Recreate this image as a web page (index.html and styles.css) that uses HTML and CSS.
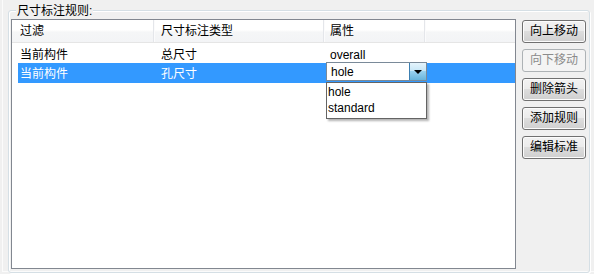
FILE: index.html
```html
<!doctype html>
<html>
<head>
<meta charset="UTF-8">
<title>尺寸标注规则</title>
<link rel="stylesheet" href="styles.css">
</head>
<body>
<div class="frame">
<div class="group">
<div class="group-title">尺寸标注规则:</div>
<div class="group-body">
<div class="list">
<div class="row head">
<div class="cell c1">过滤</div>
<div class="cell c2">尺寸标注类型</div>
<div class="cell c3">属性</div>
<div class="cell c4"></div>
</div>
<div class="row">
<div class="cell c1">当前构件</div>
<div class="cell c2">总尺寸</div>
<div class="cell c3">overall</div>
<div class="cell c4"></div>
</div>
<div class="row selected">
<div class="cell c1">当前构件</div>
<div class="cell c2">孔尺寸</div>
<div class="cell c3 edit">
<div class="combo">
<span class="combo-text">hole</span>
<span class="combo-btn"><span class="arrow"></span></span>
</div>
<div class="dropdown">
<div class="opt">hole</div>
<div class="opt">standard</div>
</div>
</div>
<div class="cell c4"></div>
</div>
</div>
<div class="buttons">
<div class="btn">向上移动</div>
<div class="btn disabled">向下移动</div>
<div class="btn">删除箭头</div>
<div class="btn">添加规则</div>
<div class="btn">编辑标准</div>
</div>
</div>
</div>
</div>
</body>
</html>
```

FILE: styles.css
```css
html, body{margin:0; padding:0;}
body{width:594px; height:274px; background-color:#f0f0f0; font-family:"Liberation Sans", "Noto Sans CJK SC", sans-serif; font-size:12px; color:#000000; overflow:hidden;}
.frame{height:272px; margin-left:2px; border-left:1px solid #fbfbfb; border-bottom:1px solid #fbfbfb; padding:10px 4px 0 5px; box-sizing:border-box;}
.group{position:relative; height:261px; border:1px solid #d5dfe5; border-radius:3px; box-shadow:inset 1px 1px 0 #ffffff, 1px 1px 0 #ffffff;}
.group-title{position:absolute; top:-8px; left:7px; padding:0 1px; line-height:16px; background-color:#f0f0f0;}
.group-body{display:flex; gap:6px; padding:8px 0 0 2px; height:100%; box-sizing:border-box;}
.list{width:505px; height:250px; border:1px solid #828790; background-color:#ffffff; box-sizing:border-box;}
.row{display:grid; grid-template-columns:142px 170px 101px 1fr; height:19px; line-height:19px;}
.row .cell{padding-top:2px;}
.row.head{height:23px; line-height:21px; background:linear-gradient(#ffffff 0%, #ffffff 45%, #f5f6f7 55%, #f3f4f6 100%); border-bottom:1px solid #e5e5e5; box-sizing:border-box; margin-bottom:1px;}
.row.head .cell{padding-top:1px; border-right:1px solid #e4e6ea; box-shadow:1px 0 0 #fbfbfc;}
.row.head .c4{border-right:none; box-shadow:none;}
.cell{padding-left:7px; white-space:nowrap; overflow:visible;}
.c1{padding-left:8px;}
.c3{padding-left:6px;}
.row.selected{height:20px; background:linear-gradient(to right, transparent 6px, #3399ff 6px); color:#ffffff;}
.row .edit{position:relative; padding-left:2px; padding-top:0;}
.combo{display:flex; width:101px; height:19px; margin-top:-1px; border:1px solid #7a8a99; background-color:#ffffff; color:#000000; box-sizing:border-box;}
.combo-text{flex:1; padding-left:4px; line-height:18px;}
.combo-btn{width:16px; display:flex; align-items:center; justify-content:center; border-left:1px solid #3c7fb1; background:linear-gradient(#e5f4fc 0%, #c4e5f6 50%, #98d1ef 50%, #68b3db 100%);}
.arrow{width:0; height:0; border-left:4px solid transparent; border-right:4px solid transparent; border-top:4px solid #000000; margin-top:1px;}
.dropdown{position:absolute; top:19px; left:2px; width:101px; padding:1px 0 2px; border:1px solid #646464; background-color:#ffffff; color:#000000; box-sizing:border-box; box-shadow:2px 2px 2px rgba(0,0,0,0.3);}
.opt{height:16px; line-height:17px; padding-left:1px;}
.buttons{display:flex; flex-direction:column; gap:6px; padding-top:1px;}
.btn{width:64px; height:23px; line-height:21px; text-align:center; border:1px solid #707070; border-radius:3px; box-sizing:border-box; background:linear-gradient(#f2f2f2 0%, #ebebeb 50%, #dddddd 50%, #cfcfcf 100%); box-shadow:inset 0 0 0 1px #fcfcfc;}
.btn.disabled{color:#8b8b8b; border-color:#adb2b5; background:#f4f4f4; box-shadow:none;}
```
